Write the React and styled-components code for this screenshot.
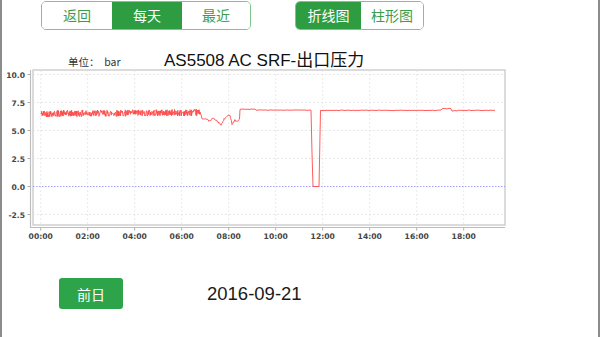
import React from "react";
import styled, { createGlobalStyle } from "styled-components";

const GlobalStyle = createGlobalStyle`
  html, body {
    margin: 0;
    padding: 0;
    background: #ffffff;
  }
  body {
    font-family: "Liberation Sans", "Noto Sans CJK SC", sans-serif;
  }
`;

const Page = styled.div`
  width: 600px;
  height: 337px;
  box-sizing: border-box;
  border-left: 2px solid #8c8c8c;
  border-right: 2px solid #8c8c8c;
  display: flex;
  flex-direction: column;
  overflow: hidden;
  background: #fff;
`;

const Toolbar = styled.div`
  display: flex;
  align-items: center;
  gap: 44px;
  padding: 1px 0 0 39px;
`;

const Segmented = styled.div`
  display: flex;
  height: 29px;
  box-sizing: border-box;
  border: 1px solid #80c48a;
  border-radius: 5px;
  overflow: hidden;
`;

const Segment = styled.button`
  width: ${(p) => p.$w}px;
  height: 100%;
  border: none;
  margin: 0;
  padding: 0;
  background: ${(p) => (p.$active ? "#2e9c41" : "#ffffff")};
  color: ${(p) => (p.$active ? "#ffffff" : "#3b9d4a")};
  font-family: "Noto Sans CJK SC", sans-serif;
  font-size: 14px;
  line-height: 27px;
  cursor: pointer;
`;

const TitleRow = styled.div`
  display: flex;
  align-items: baseline;
  height: 22px;
  margin-top: 16px;
  padding-left: 66px;
`;

const Unit = styled.span`
  font-family: "Noto Sans CJK SC", sans-serif;
  font-size: 10.5px;
  color: #333;
  width: 96px;
  white-space: pre;
`;

const Title = styled.span`
  font-family: "Liberation Sans", "Noto Sans CJK SC", sans-serif;
  font-size: 17px;
  color: #111;
`;

const Chart = styled.svg`
  display: block;
  width: 596px;
  height: 176px;
`;

const BottomRow = styled.div`
  display: flex;
  align-items: center;
  margin-top: 34px;
  padding-left: 57px;
`;

const PrevButton = styled.button`
  width: 64px;
  height: 31px;
  border: none;
  border-radius: 3px;
  background: #2ea44a;
  color: #fff;
  font-family: "Noto Sans CJK SC", sans-serif;
  font-size: 14px;
  padding: 0;
  cursor: pointer;
`;

const DateText = styled.span`
  margin-left: 84px;
  font-family: "Liberation Sans", sans-serif;
  font-size: 18.5px;
  color: #1a1a1a;
`;

// chart coordinates are page coordinates (viewBox offset)
const X0 = 40.7;
const PX_PER_HOUR = 23.5;
const Y0 = 186.5;
const PX_PER_UNIT = 11.2;
const PLOT = { left: 33, right: 505, top: 70, bottom: 225 };

const yOf = (v) => Y0 - v * PX_PER_UNIT;

function makeRng(seed) {
  let a = seed >>> 0;
  return () => {
    a = (a + 0x6d2b79f5) >>> 0;
    let t = a;
    t = Math.imul(t ^ (t >>> 15), t | 1);
    t ^= t + Math.imul(t ^ (t >>> 7), t | 61);
    return ((t ^ (t >>> 14)) >>> 0) / 4294967296;
  };
}

function buildSeries() {
  const r = makeRng(42);
  const pts = [];
  // dense noisy band before 7h
  for (let x = 41; x <= 200; x += 0.3) {
    const trend = ((x - 41) / 159) * 0.1;
    pts.push([x, 6.5 + trend + (r() - 0.5) * 0.6]);
  }
  // wandering dip
  const keys = [
    [200, 6.7], [202, 6.1], [206, 6.0], [210, 5.85], [213, 6.1], [216, 5.9],
    [219, 5.7], [221, 5.45], [224, 6.0], [227, 6.25], [230, 6.4], [232, 5.6],
    [235, 5.95], [237, 5.8], [239.5, 6.0], [240, 6.92],
  ];
  for (let i = 0; i < keys.length - 1; i++) {
    const [xa, va] = keys[i];
    const [xb, vb] = keys[i + 1];
    for (let x = xa; x < xb; x += 0.7) {
      const t = (x - xa) / (xb - xa);
      pts.push([x, va + (vb - va) * t + (r() - 0.5) * 0.15]);
    }
  }
  // flat before the drop
  for (let x = 240; x <= 311; x += 1) {
    const base = x < 256 ? 6.9 : 6.82;
    pts.push([x, base + (r() - 0.5) * 0.05]);
  }
  pts.push([312, 3.0], [313, 0], [319, 0], [320.5, 6.8]);
  // flat after the drop
  for (let x = 321; x <= 495; x += 1) {
    let base = 6.8;
    if (x >= 442 && x <= 451) base = 6.95;
    if (x > 451 && x < 458) base = 6.76;
    pts.push([x, base + (r() - 0.5) * 0.05]);
  }
  return pts.map(([x, v]) => `${x.toFixed(1)},${yOf(v).toFixed(1)}`).join(" ");
}

const series = buildSeries();
const yTicks = [10, 7.5, 5, 2.5, 0, -2.5];
const xTicks = [0, 2, 4, 6, 8, 10, 12, 14, 16, 18];
const pad = (h) => `${String(h).padStart(2, "0")}:00`;

const PressureChart = () => (
  <Chart viewBox="2 68 596 176" xmlns="http://www.w3.org/2000/svg">
    <rect
      x={PLOT.left}
      y={PLOT.top}
      width={PLOT.right - PLOT.left}
      height={PLOT.bottom - PLOT.top}
      fill="#fff"
      stroke="#c4c4c4"
      strokeWidth="1.2"
    />
    {xTicks.map((h) => {
      const x = X0 + h * PX_PER_HOUR;
      return (
        <line key={`gx${h}`} x1={x} x2={x} y1={PLOT.top} y2={PLOT.bottom}
          stroke="#e2e2e2" strokeWidth="0.8" strokeDasharray="2 2" />
      );
    })}
    {yTicks.filter((v) => v !== 0).map((v) => (
      <line key={`gy${v}`} x1={PLOT.left} x2={PLOT.right} y1={yOf(v)} y2={yOf(v)}
        stroke="#e2e2e2" strokeWidth="0.8" strokeDasharray="2 2" />
    ))}
    <line x1={PLOT.left} x2={PLOT.right} y1={Y0} y2={Y0}
      stroke="#8c8cff" strokeWidth="0.8" strokeDasharray="1.5 1.5" />
    <polyline points={series} fill="none" stroke="#ff4a4a" strokeWidth="0.9" strokeLinejoin="round" />
    {/* axes */}
    <line x1="30.5" x2="30.5" y1={PLOT.top} y2="228" stroke="#bdbdbd" strokeWidth="1.2" />
    <line x1="30" x2={PLOT.right} y1="227.5" y2="227.5" stroke="#bdbdbd" strokeWidth="1.2" />
    {yTicks.map((v) => (
      <g key={`ly${v}`}>
        <line x1="27.5" x2="30" y1={yOf(v)} y2={yOf(v)} stroke="#999" strokeWidth="0.8" />
        <text x="25" y={yOf(v) + 3} textAnchor="end" fontFamily="DejaVu Sans, sans-serif"
          fontWeight="bold" fontSize="7.6" fill="#444">
          {v.toFixed(1)}
        </text>
      </g>
    ))}
    {xTicks.map((h) => {
      const x = X0 + h * PX_PER_HOUR;
      return (
        <g key={`lx${h}`}>
          <line x1={x} x2={x} y1="228" y2="230.5" stroke="#999" strokeWidth="0.8" />
          <text x={x} y="238.5" textAnchor="middle" fontFamily="DejaVu Sans, sans-serif"
            fontWeight="bold" fontSize="7.6" fill="#444">
            {pad(h)}
          </text>
        </g>
      );
    })}
  </Chart>
);

const App = () => (
  <>
    <GlobalStyle />
    <Page>
      <Toolbar>
        <Segmented>
          <Segment $w={70}>返回</Segment>
          <Segment $w={70} $active>每天</Segment>
          <Segment $w={68}>最近</Segment>
        </Segmented>
        <Segmented>
          <Segment $w={65} $active>折线图</Segment>
          <Segment $w={62}>柱形图</Segment>
        </Segmented>
      </Toolbar>
      <TitleRow>
        <Unit>{"单位：  bar"}</Unit>
        <Title>AS5508 AC SRF-出口压力</Title>
      </TitleRow>
      <PressureChart />
      <BottomRow>
        <PrevButton>前日</PrevButton>
        <DateText>2016-09-21</DateText>
      </BottomRow>
    </Page>
  </>
);

export default App;
